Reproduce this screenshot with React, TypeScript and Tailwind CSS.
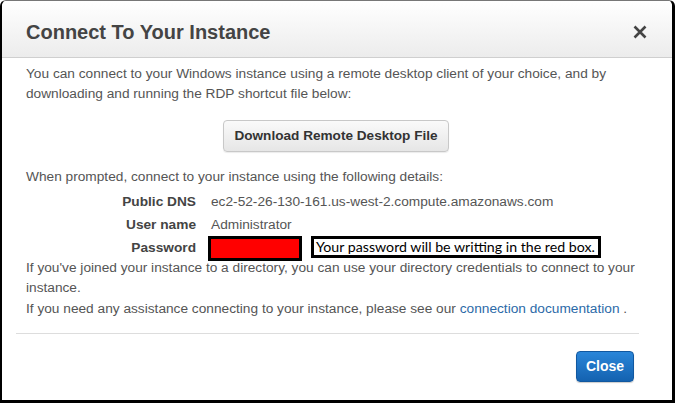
export default function App() {
  return (
    <div className="w-[675px] h-[403px] bg-white overflow-hidden" style={{ fontFamily: '"Liberation Sans", Arial, sans-serif' }}>
      <div className="h-full flex flex-col border-l-2 border-r-[3px] border-b-[3px] border-black rounded-tl-[6px] rounded-tr-[6px] border-t border-t-[#777]">
        {/* header */}
        <div className="h-[57px] shrink-0 flex items-center justify-between pl-6 pr-6 pt-[5px] bg-gradient-to-b from-white to-[#ececec] border-b border-[#cfcfcf] rounded-t-[5px]">
          <h1 className="text-[20px] font-bold text-[#444] leading-none">Connect To Your Instance</h1>
          <svg width="14" height="14" viewBox="0 0 14 14" className="mr-[1px]">
            <path d="M1.5 1.5 L12.5 12.5 M12.5 1.5 L1.5 12.5" stroke="#444" strokeWidth="2.6" strokeLinecap="butt" />
          </svg>
        </div>

        {/* body */}
        <div className="flex-1 px-6 pt-[6px] text-[13.7px] leading-[20px] text-[#555]">
          <p>
            You can connect to your Windows instance using a remote desktop client of your choice, and by
            downloading and running the RDP shortcut file below:
          </p>
          <div className="flex justify-center pt-[16px] pb-[15px] pr-[2px]">
            <button className="h-[32px] px-[10px] rounded-[4px] border border-[#c8c8c8] bg-gradient-to-b from-[#fafafa] to-[#e6e6e6] text-[13.6px] font-bold text-[#333] shadow-[0_1px_1px_rgba(0,0,0,0.08)]">
              Download Remote Desktop File
            </button>
          </div>
          <p>When prompted, connect to your instance using the following details:</p>
          <div className="grid grid-cols-[170px_1fr] gap-x-[15px] mt-[3px]">
            <div className="text-right font-bold text-[#444] leading-[23px]">Public DNS</div>
            <div className="leading-[23px]">ec2-52-26-130-161.us-west-2.compute.amazonaws.com</div>
            <div className="text-right font-bold text-[#444] leading-[23px]">User name</div>
            <div className="leading-[23px]">Administrator</div>
            <div className="text-right font-bold text-[#444] leading-[23px]">Password</div>
            <div className="flex items-start gap-[9px] -ml-[3px] h-[23px]">
              <div className="w-[94px] h-[25px] bg-[#ff0000] border-[3px] border-black"></div>
              <div
                className="h-[22px] w-[290px] border-[3px] border-black text-black text-[14.2px] leading-[16px] px-[2px] whitespace-nowrap"
                style={{ fontFamily: 'Lato, "Open Sans", sans-serif' }}
              >
                Your password will be writting in the red box.
              </div>
            </div>
          </div>
          <p className="mt-[-1px]">
            If you've joined your instance to a directory, you can use your directory credentials to connect to your
            instance.
          </p>
          <p className="mt-[1px]">
            If you need any assistance connecting to your instance, please see our{' '}
            <a className="text-[#2c6aa8]">connection documentation</a> .
          </p>
        </div>

        {/* footer */}
        <div className="ml-[14px] mr-[33px] border-t border-[#ddd]"></div>
        <div className="flex justify-end pt-[17px] pb-[18px] pr-[38px]">
          <button className="w-[58px] h-[31px] rounded-[4px] bg-gradient-to-b from-[#2a86d9] to-[#1462b0] border border-[#1158a0] text-white text-[14px] font-bold shadow-[0_1px_1px_rgba(0,0,0,0.2)]">
            Close
          </button>
        </div>
      </div>
    </div>
  )
}
